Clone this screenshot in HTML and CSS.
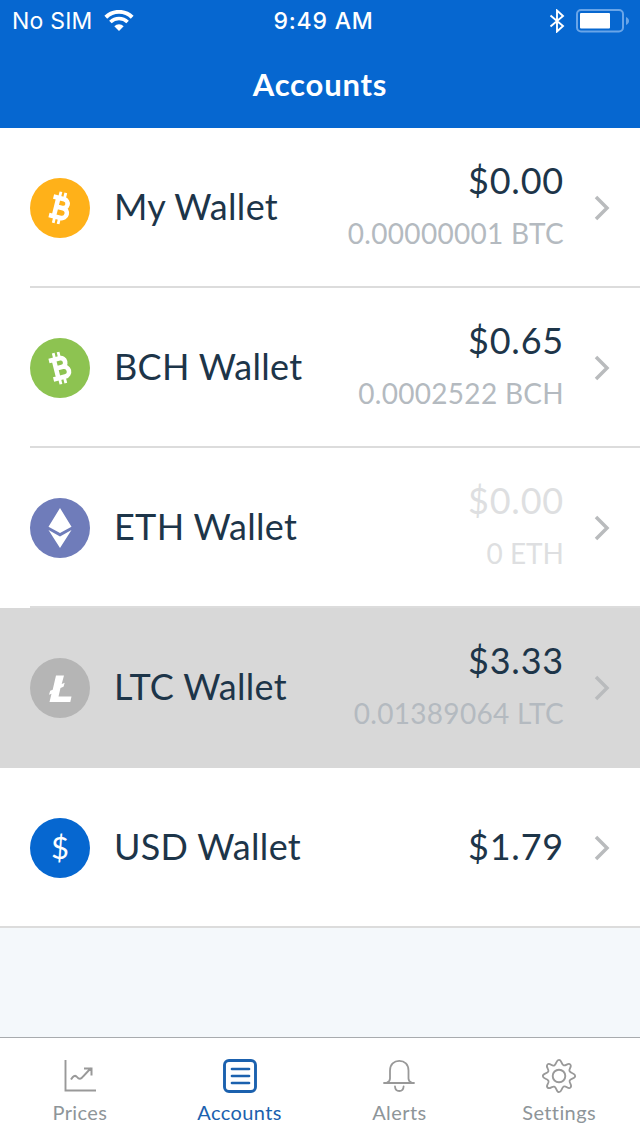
FILE: index.html
```html
<!DOCTYPE html>
<html lang="en">

<head>
    <meta charset="utf-8">
    <title>Accounts</title>
    <link rel="stylesheet" href="styles.css">
</head>

<body>

    <header class="header">
        <div class="status">
            <div class="status-left">
                <span class="carrier">No SIM</span>
                <svg class="wifi" width="30" height="22" viewBox="0 0 30 22">
                    <path d="M1.8 7.2a19 19 0 0 1 26.4 0" fill="none" stroke="#fff" stroke-width="4" />
                    <path d="M6.4 12a12.4 12.4 0 0 1 17.2 0" fill="none" stroke="#fff" stroke-width="3.6" />
                    <path d="M15 21l-4.7-4.8a6.8 6.8 0 0 1 9.4 0z" fill="#fff" />
                </svg>
            </div>
            <span class="time">9:49 AM</span>
            <div class="status-right">
                <svg width="16" height="24" viewBox="0 0 16 24">
                    <path d="M1.5 6.5L14 17l-6 5.500v-21L14 7 1.500 17.500" fill="none" stroke="#fff" stroke-width="1.900" />
                </svg>
                <svg width="54" height="24" viewBox="0 0 54 24">
                    <rect x="1" y="1" width="46" height="21.5" rx="4" fill="none" stroke="#69a5e8" stroke-width="2" />
                    <rect x="4" y="4" width="30" height="15.5" rx="1" fill="#fff" />
                    <path d="M50 8c4 1.500 4 6.500 0 8z" fill="#69a5e8" />
                </svg>
            </div>
        </div>
        <h1 class="title">Accounts</h1>
    </header>

    <!-- Wallets -->
    <main class="wallets">
        <div class="wallet">
            <svg class="coin" viewBox="0 0 60 60">
                <circle cx="30" cy="30" r="30" fill="#ffb119" />
                <g transform="rotate(14 30 30)" fill="none" stroke="#fff">
                    <path d="M26 20.500v19M21 20.500h11a4.500 4.500 0 0 1 0 9h-6M32 29.500h1a5 5 0 0 1 0 10H21" stroke-width="4.600" />
                    <path d="M27 14v6M32 14v6M27 40v6M32 40v6" stroke-width="2.800" />
                </g>
            </svg>
            <div class="name">My Wallet</div>
            <div class="balance">
                <div class="amount">$0.00</div>
                <div class="crypto">0.00000001 BTC</div>
            </div>
            <svg class="arrow" viewBox="0 0 16 26"><path d="M2 2l11 11L2 24" /></svg>
        </div>

        <div class="wallet">
            <svg class="coin" viewBox="0 0 60 60">
                <circle cx="30" cy="30" r="30" fill="#8dc351" />
                <g transform="rotate(-14 30 30)" fill="none" stroke="#fff">
                    <path d="M26 20.500v19M21 20.500h11a4.500 4.500 0 0 1 0 9h-6M32 29.500h1a5 5 0 0 1 0 10H21" stroke-width="4.600" />
                    <path d="M27 14v6M32 14v6M27 40v6M32 40v6" stroke-width="2.800" />
                </g>
            </svg>
            <div class="name">BCH Wallet</div>
            <div class="balance">
                <div class="amount">$0.65</div>
                <div class="crypto">0.0002522 BCH</div>
            </div>
            <svg class="arrow" viewBox="0 0 16 26"><path d="M2 2l11 11L2 24" /></svg>
        </div>

        <div class="wallet empty">
            <svg class="coin" viewBox="0 0 60 60">
                <circle cx="30" cy="30" r="30" fill="#6f7cba" />
                <path d="M30 10l11.500 18.800L30 35l-11.500-6.200zM18.500 32L30 38.500 41.500 32 30 50z" fill="#fff" />
            </svg>
            <div class="name">ETH Wallet</div>
            <div class="balance">
                <div class="amount">$0.00</div>
                <div class="crypto">0 ETH</div>
            </div>
            <svg class="arrow" viewBox="0 0 16 26"><path d="M2 2l11 11L2 24" /></svg>
        </div>

        <div class="wallet pressed">
            <svg class="coin" viewBox="0 0 60 60">
                <circle cx="30" cy="30" r="30" fill="#b5b5b5" />
                <path d="M26 17.500h8l-2.300 8.500 3-1.200-1.200 4-3 1.300-2 8.300h13L40.300 44H19.500l2-8.200-2.500 1 1.200-4 2.500-1z" fill="#fff" />
            </svg>
            <div class="name">LTC Wallet</div>
            <div class="balance">
                <div class="amount">$3.33</div>
                <div class="crypto">0.01389064 LTC</div>
            </div>
            <svg class="arrow" viewBox="0 0 16 26"><path d="M2 2l11 11L2 24" /></svg>
        </div>

        <div class="wallet last">
            <div class="coin coin-usd">$</div>
            <div class="name">USD Wallet</div>
            <div class="balance single">
                <div class="amount">$1.79</div>
            </div>
            <svg class="arrow" viewBox="0 0 16 26"><path d="M2 2l11 11L2 24" /></svg>
        </div>
    </main>

    <!-- Bottom tabs -->
    <nav class="tabs">
        <a class="tab">
            <svg viewBox="0 0 36 36">
                <path d="M3.500 2v30.500H34" stroke-width="1.900" />
                <path d="M9 21.500c2-3 4-5 6-2.500 2 2.500 4 2.500 6-.5l8-8.500M22 10.500h7.500v7" stroke-width="2" />
            </svg>
            <span>Prices</span>
        </a>
        <a class="tab active">
            <svg viewBox="0 0 36 36">
                <rect x="2.500" y="2.500" width="31" height="31" rx="4.500" stroke-width="2.900" />
                <path d="M10 11h17M10 18h17M10 25h17" stroke-width="2.700" stroke-linecap="round" />
            </svg>
            <span>Accounts</span>
        </a>
        <a class="tab">
            <svg viewBox="0 0 36 36">
                <path d="M3 25h30M6 24.500c2-.8 3-2 3-4V12.500C9 6.500 13 2.800 18.300 2.800s9.200 3.700 9.200 9.700v8c0 2 1 3.200 3 4M14 28.500c.3 6 8.300 6 8.600 0" stroke-width="1.800" stroke-linecap="round" />
            </svg>
            <span>Alerts</span>
        </a>
        <a class="tab">
            <svg viewBox="0 0 36 36">
                <path d="M18 1.800C20.800 1.800 20.300 6.800 22.700 7.400S27.200 4.300 29.300 6.500 27.200 11 28.600 13.300 34.200 15.200 34.200 18 29.200 20.300 28.600 22.700 31.700 27.200 29.500 29.500 25 27.200 22.700 28.600 20.800 34.200 18 34.200 15.700 29.200 13.300 28.600 8.800 31.700 6.500 29.500 8.800 25 7.400 22.700 1.800 20.800 1.800 18 6.800 15.700 7.400 13.300 4.300 8.800 6.500 6.500 11 8.800 13.300 7.400 15.200 1.800 18 1.800z" stroke-width="1.800" />
                <circle cx="18" cy="18" r="6.300" stroke-width="1.900" />
            </svg>
            <span>Settings</span>
        </a>
    </nav>

</body>

</html>
```

FILE: styles.css
```css
* {
    box-sizing: border-box;
}

body {
    margin: 0;
    height: 1136px;
    display: flex;
    flex-direction: column;
    background-color: #f4f8fb;
    font-family: Lato, sans-serif;
    color: #1d3549;
}

/* Header */

.header {
    height: 128px;
    background-color: #0667d0;
    color: #fff;
}

.status {
    height: 42px;
    padding: 0 10px 0 12px;
    display: grid;
    grid-template-columns: 1fr auto 1fr;
    align-items: center;
    font-family: Inter, sans-serif;
    font-size: 23px;
}

.status-left,
.status-right {
    display: flex;
    align-items: center;
}

.status-left {
    gap: 11px;
}

.status-right {
    justify-content: flex-end;
    gap: 11px;
}

.carrier {
    letter-spacing: 0.2px;
}

.time {
    padding-left: 5px;
    font-weight: 500;
    letter-spacing: 0.8px;
}

.title {
    margin: 0;
    line-height: 80px;
    padding-top: 2px;
    text-align: center;
    font-size: 31px;
    font-weight: 700;
    letter-spacing: 0.8px;
}

/* Wallet rows */

.wallet {
    display: flex;
    align-items: center;
    height: 160px;
    padding: 0 30px;
    background: linear-gradient(#dcdcdc, #dcdcdc) 30px 100% / 100% 2px no-repeat #fff;
}

.wallet.last {
    background-position: 0 100%;
}

.wallet.pressed {
    background: #d8d8d8;
}

.coin {
    width: 60px;
    height: 60px;
    flex: none;
}

.coin-usd {
    border-radius: 50%;
    background-color: #0667d0;
    color: #fff;
    text-align: center;
    font-size: 31px;
    line-height: 58px;
}

.name {
    flex: 1;
    padding: 0 0 4px 24px;
    font-size: 36px;
    line-height: 44px;
    letter-spacing: 0.3px;
    white-space: nowrap;
}

.balance {
    height: 160px;
    padding-top: 25px;
    text-align: right;
    white-space: nowrap;
}

.balance.single {
    padding-top: 51px;
}

.amount {
    font-size: 36px;
    line-height: 54px;
    letter-spacing: 0.8px;
}

.crypto {
    font-size: 28px;
    line-height: 52px;
    letter-spacing: 0.3px;
    color: #b4bac0;
}

.empty .amount,
.empty .crypto {
    color: #dedfe1;
}

.empty .crypto {
    letter-spacing: 0;
}

.arrow {
    flex: none;
    width: 16px;
    height: 26px;
    margin-left: 30px;
}

.arrow path {
    fill: none;
    stroke: #b9bbbd;
    stroke-width: 3.5;
}

/* Tabs */

.tabs {
    display: grid;
    grid-template-columns: repeat(4, 1fr);
    height: 99px;
    margin-top: auto;
    padding-right: 1px;
    background-color: #fff;
    border-top: 1px solid #a8abae;
}

.tab {
    display: flex;
    flex-direction: column;
    align-items: center;
    padding-top: 20px;
    color: #8e9599;
    font-size: 20px;
    line-height: 37px;
    letter-spacing: 0.4px;
    font-variant-ligatures: none;
}

.tab svg {
    width: 36px;
    height: 36px;
    fill: none;
    stroke: #999;
}

.tab.active {
    color: #1b61ae;
}

.tab.active svg {
    stroke: #1b61ae;
}
```
